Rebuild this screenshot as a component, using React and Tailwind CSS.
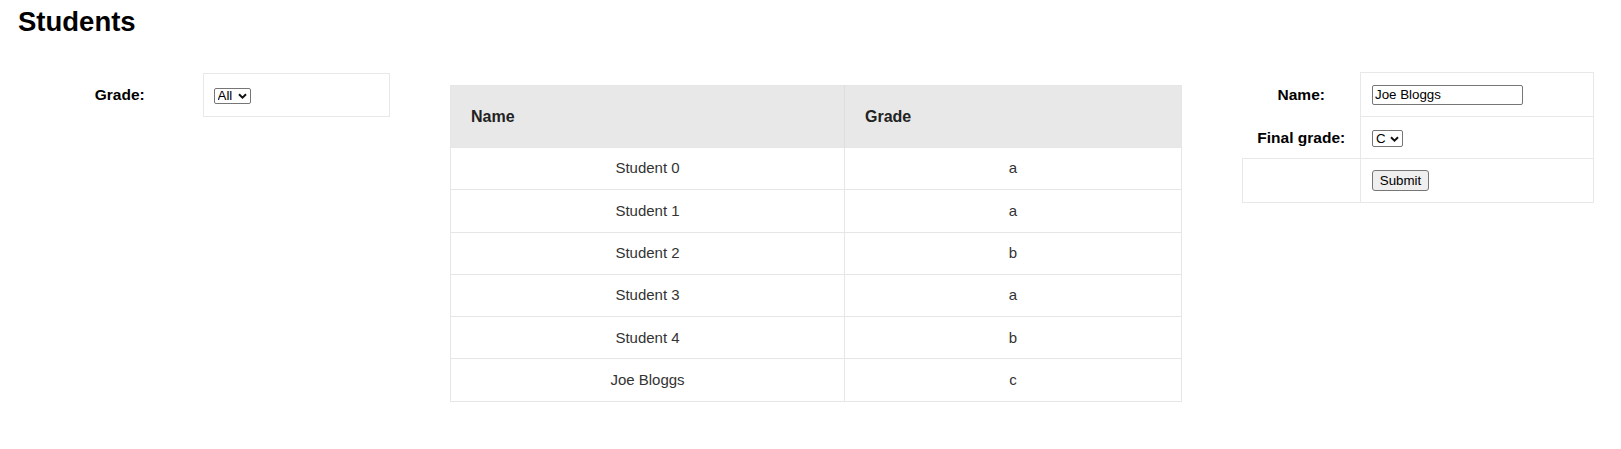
import { useState } from "react";

const students = [
  { name: "Student 0", grade: "a" },
  { name: "Student 1", grade: "a" },
  { name: "Student 2", grade: "b" },
  { name: "Student 3", grade: "a" },
  { name: "Student 4", grade: "b" },
  { name: "Joe Bloggs", grade: "c" },
];

function Chevron() {
  return (
    <svg
      width="9"
      height="6"
      viewBox="0 0 9 6"
      className="pointer-events-none absolute right-[4px] top-1/2 -translate-y-1/2"
    >
      <path d="M1 1.2 L4.5 4.6 L8 1.2" fill="none" stroke="#111" strokeWidth="2" />
    </svg>
  );
}

function NativeSelect({ value, onChange, options, width }) {
  return (
    <div className={`relative inline-block ${width}`}>
      <select
        value={value}
        onChange={(e) => onChange(e.target.value)}
        className="block h-full w-full appearance-none rounded-[2px] border border-[#767676] bg-white pl-[3px] pr-[14px] text-[13.33px] leading-[14px] text-black"
      >
        {options.map((o) => (
          <option key={o}>{o}</option>
        ))}
      </select>
      <Chevron />
    </div>
  );
}

export default function App() {
  const [filter, setFilter] = useState("All");
  const [name, setName] = useState("Joe Bloggs");
  const [finalGrade, setFinalGrade] = useState("C");

  return (
    <div className="min-h-screen bg-white font-['Liberation_Sans',Arial,sans-serif] text-black">
      <h1 className="pl-[18px] pt-[6px] text-[27.5px] font-bold leading-[32px]">Students</h1>

      <div className="mt-[34px] flex items-start">
        {/* filter */}
        <table className="ml-[37px] mt-[1px] w-[353px]">
          <tbody>
            <tr className="h-[43px]">
              <th className="w-[166px] text-center text-[15.5px] font-bold">Grade:</th>
              <td className="border border-[#e8e8e8] px-[10px]">
                <NativeSelect
                  value={filter}
                  onChange={setFilter}
                  options={["All", "A", "B", "C"]}
                  width="h-[16px] w-[37px]"
                />
              </td>
            </tr>
          </tbody>
        </table>

        {/* list */}
        <table className="ml-[60px] mt-[13px] w-[732px] border border-[#e6e6e6]">
          <thead>
            <tr className="h-[62px] bg-[#e8e8e8]">
              <th className="w-[394px] border-r border-[#dedede] pl-[20px] text-left text-[16px] font-bold text-[#222]">
                Name
              </th>
              <th className="pl-[20px] text-left text-[16px] font-bold text-[#222]">Grade</th>
            </tr>
          </thead>
          <tbody>
            {students.map((s) => (
              <tr key={s.name} className="h-[42.3px] border-t border-[#e6e6e6]">
                <td className="border-r border-[#e6e6e6] text-center text-[15px] text-[#333]">{s.name}</td>
                <td className="text-center text-[15px] text-[#333]">{s.grade}</td>
              </tr>
            ))}
          </tbody>
        </table>

        {/* add form */}
        <table className="ml-[60px] w-[352px]">
          <tbody>
            <tr className="h-[44px]">
              <th className="w-[118px] text-center text-[15.5px] font-bold">Name:</th>
              <td className="border border-[#e8e8e8] px-[11px]">
                <input
                  value={name}
                  onChange={(e) => setName(e.target.value)}
                  className="block h-[20px] w-[151px] rounded-[2px] border border-[#767676] bg-white px-[2px] text-[13.33px] text-black"
                />
              </td>
            </tr>
            <tr className="h-[42px]">
              <th className="text-center text-[15.5px] font-bold">Final grade:</th>
              <td className="border border-[#e8e8e8] px-[11px]">
                <NativeSelect
                  value={finalGrade}
                  onChange={setFinalGrade}
                  options={["A", "B", "C"]}
                  width="h-[17px] w-[31px]"
                />
              </td>
            </tr>
            <tr className="h-[44px]">
              <td className="border border-[#e8e8e8]"></td>
              <td className="border border-[#e8e8e8] px-[11px]">
                <button className="block h-[21px] w-[57px] rounded-[3px] border border-[#767676] bg-[#efefef] text-[13.33px] text-black">
                  Submit
                </button>
              </td>
            </tr>
          </tbody>
        </table>
      </div>
    </div>
  );
}
